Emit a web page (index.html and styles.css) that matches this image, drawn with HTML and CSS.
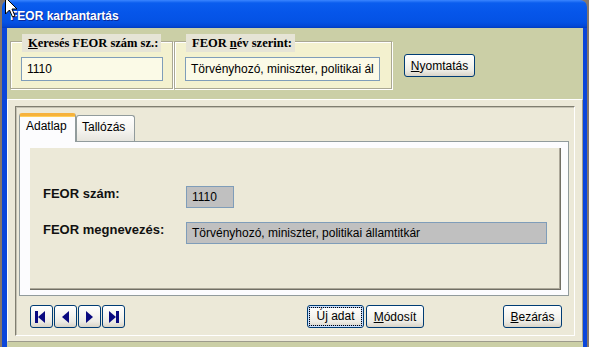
FILE: index.html
```html
<!DOCTYPE html>
<html>
<head>
  <meta charset="utf-8">
  <title>FEOR karbantartás</title>
  <link rel="stylesheet" href="styles.css">
</head>
<body>
  <svg class="cursor" width="13" height="21" viewBox="0 0 13 21">
    <path d="M0.5 0.5 L0.5 17 L4.5 13 L7.5 20 L10 19 L7 12 L12 12 Z" fill="#fff" stroke="#000"/>
  </svg>
  <div class="window">
    <div class="titlebar">FEOR karbantartás</div>
    <div class="client">
      <div class="search-bar">
        <div class="group group-code">
          <div class="legend legend-code"><u>K</u>eresés FEOR szám sz.:</div>
          <div class="search-input code-input">1110</div>
        </div>
        <div class="group group-name">
          <div class="legend legend-name">FEOR <u>n</u>év szerint:</div>
          <div class="search-input name-input">Törvényhozó, miniszter, politikai ál</div>
        </div>
        <button class="xp-btn print-btn"><u>N</u>yomtatás</button>
      </div>

      <div class="lower">
        <div class="frame">
          <div class="tabs">
            <div class="tab tab-data active">Adatlap</div>
            <div class="tab tab-browse">Tallózás</div>
          </div>
          <div class="tab-panel">
            <div class="sheet">
              <div class="label">FEOR szám:</div>
              <div class="field field-code">1110</div>
              <div class="label">FEOR megnevezés:</div>
              <div class="field field-name">Törvényhozó, miniszter, politikai államtitkár</div>
            </div>
          </div>
          <div class="actions">
            <div class="nav">
              <button class="xp-btn nav-btn" title="Első">
                <svg width="21" height="21" viewBox="0 0 21 21"><rect x="4" y="5" width="3" height="12"/><polygon points="7,11 14,5 14,17"/></svg>
              </button>
              <button class="xp-btn nav-btn" title="Előző">
                <svg width="21" height="21" viewBox="0 0 21 21"><polygon points="7,11 14,5 14,17"/></svg>
              </button>
              <button class="xp-btn nav-btn" title="Következő">
                <svg width="21" height="21" viewBox="0 0 21 21"><polygon points="7,5 7,17 14,11"/></svg>
              </button>
              <button class="xp-btn nav-btn" title="Utolsó">
                <svg width="21" height="21" viewBox="0 0 21 21"><polygon points="6,5 6,17 13,11"/><rect x="13" y="5" width="3" height="12"/></svg>
              </button>
            </div>
            <div class="edit-buttons">
              <button class="xp-btn new-btn focused"><span class="focus-ring">Ú<u>j</u> adat</span></button>
              <button class="xp-btn modify-btn"><u>M</u>ódosít</button>
            </div>
            <button class="xp-btn close-btn"><u>B</u>ezárás</button>
          </div>
        </div>
      </div>
    </div>
  </div>
</body>
</html>
```

FILE: styles.css
```css
* {
  box-sizing: border-box;
}
body {
  margin: 0;
  background: #85776c;
  font-family: "Liberation Sans", Arial, sans-serif;
  font-size: 12px;
  color: #000;
}
u {
  text-decoration-thickness: 1px;
  text-underline-offset: 1px;
}

/* mouse pointer lying over the title bar */
.cursor {
  position: absolute;
  left: 5px;
  top: -3px;
  z-index: 5;
}

.window {
  width: 585px;
  height: 347px;
  margin-left: 2px;
  overflow: hidden;
}
.titlebar {
  height: 28px;
  padding: 9px 0 0 8px;
  border-radius: 7px 7px 0 0;
  background: linear-gradient(180deg, #3a85ff 0, #0a5dee 3px, #0656ea 12px, #0452e4 22px, #0348d6 26px, #003cc0 28px);
  color: #fff;
  font-weight: bold;
  font-size: 12px;
  line-height: 14px;
  text-shadow: 1px 1px 0 #0c2a98;
}
.client {
  height: 319px;
  background: #cbcfa6;
  border-left: 5px solid #0b46da;
  border-right: 4px solid #0b46da;
}

/* search area */
.search-bar {
  display: flex;
  align-items: flex-start;
  height: 71px;
  padding: 13px 0 0 3px;
}
.group {
  display: flex;
  flex-direction: column;
  align-items: flex-start;
  height: 48px;
  padding-left: 10px;
  background: #f3f1cf;
  border: 1px solid #aaa893;
  box-shadow: inset 1px 1px 0 #fff, 1px 1px 0 #fff;
}
.group-code {
  width: 163px;
}
.group-name {
  width: 218px;
  margin-left: 1px;
}
.legend {
  height: 18px;
  margin: -8px 0 0 1px;
  padding: 0 3px 0 6px;
  background: #e6e4d6;
  font-family: "Liberation Serif", "Times New Roman", serif;
  font-weight: bold;
  font-size: 12.5px;
  line-height: 18px;
  white-space: nowrap;
}
.search-input {
  height: 24px;
  margin-top: 5px;
  padding-left: 5px;
  border: 1px solid #7f9db9;
  background: #fbfae7;
  line-height: 22px;
  white-space: nowrap;
  overflow: hidden;
}
.code-input {
  width: 142px;
}
.name-input {
  width: 195px;
}

/* XP style buttons */
.xp-btn {
  display: flex;
  align-items: center;
  justify-content: center;
  padding: 0;
  border: 1px solid #003c74;
  border-radius: 3px;
  background: linear-gradient(180deg, #fff 0%, #f6f5f0 45%, #ecebe4 75%, #d9d3c7 100%);
  font-family: "Liberation Sans", Arial, sans-serif;
  font-size: 12px;
  color: #000;
  height: 23px;
}
.print-btn {
  width: 71px;
  margin: 13px 0 0 12px;
}

/* lower part */
.lower {
  height: 243px;
  padding: 6px 0 0 7px;
  background: #ece9d8;
  border: 1px solid;
  border-color: #fff #9d9b8c #9d9b8c #fff;
}
.frame {
  display: flex;
  flex-direction: column;
  width: 560px;
  height: 230px;
  padding: 6px 0 0 3px;
  border: 1px solid;
  border-color: #807e70 #fff #fff #807e70;
  box-shadow: inset 1px 1px 0 #c4c1b2;
}
.tabs {
  display: flex;
  align-items: flex-end;
  height: 28px;
}
.tab {
  height: 26px;
  padding-top: 4px;
  border: 1px solid #919b9c;
  border-bottom: none;
  border-radius: 3px 3px 0 0;
  background: linear-gradient(180deg, #fff 0%, #f5f4f0 55%, #e6e5de 100%);
  line-height: 14px;
  white-space: nowrap;
}
.tab-data {
  width: 57px;
  padding-left: 6px;
}
.tab-browse {
  width: 59px;
  padding-left: 5px;
}
.tab.active {
  position: relative;
  z-index: 1;
  height: 29px;
  margin-bottom: -1px;
  padding-top: 3px;
  border-top: 3px solid #f6b23c;
  background: #fcfcfe;
  box-shadow: inset 0 1px 0 #ffcf5a;
}
.tab-panel {
  width: 550px;
  height: 155px;
  padding: 6px 7px 5px 10px;
  border: 1px solid #919b9c;
  background: #fcfcfe;
}
.sheet {
  display: grid;
  grid-template-columns: 143px auto;
  justify-content: start;
  align-content: start;
  row-gap: 14px;
  height: 142px;
  padding: 38px 0 0 13px;
  background: #ece9d8;
  border-right: 1px solid #716f64;
  border-bottom: 1px solid #716f64;
  box-shadow: inset -1px -1px 0 #aca899;
}
.label {
  font-weight: bold;
  font-size: 13px;
  line-height: 15px;
  color: #111;
}
.field {
  height: 22px;
  padding-left: 5px;
  border: 1px solid #7f9db9;
  background: #c0c0c0;
  line-height: 20px;
  white-space: nowrap;
}
.field-code {
  width: 48px;
}
.field-name {
  width: 361px;
}

.actions {
  display: flex;
  height: 23px;
  margin-top: 9px;
  padding: 0 12px 0 11px;
}
.nav {
  display: flex;
}
.nav-btn {
  width: 23px;
  margin-right: 1px;
}
.nav-btn:last-child {
  margin-right: 0;
}
.nav-btn svg {
  display: block;
  fill: #0a0a80;
}
.edit-buttons {
  display: flex;
  margin-left: 182px;
}
.new-btn {
  width: 57px;
}
.new-btn.focused {
  box-shadow: inset 0 0 0 1px #cde0fb, inset 0 0 0 2px #a6c2ee;
}
.focus-ring {
  padding: 1px 6px;
  border: 1px dotted #000;
  line-height: 15px;
}
.modify-btn {
  width: 58px;
  margin-left: 2px;
}
.close-btn {
  width: 59px;
  margin-left: auto;
}
```
